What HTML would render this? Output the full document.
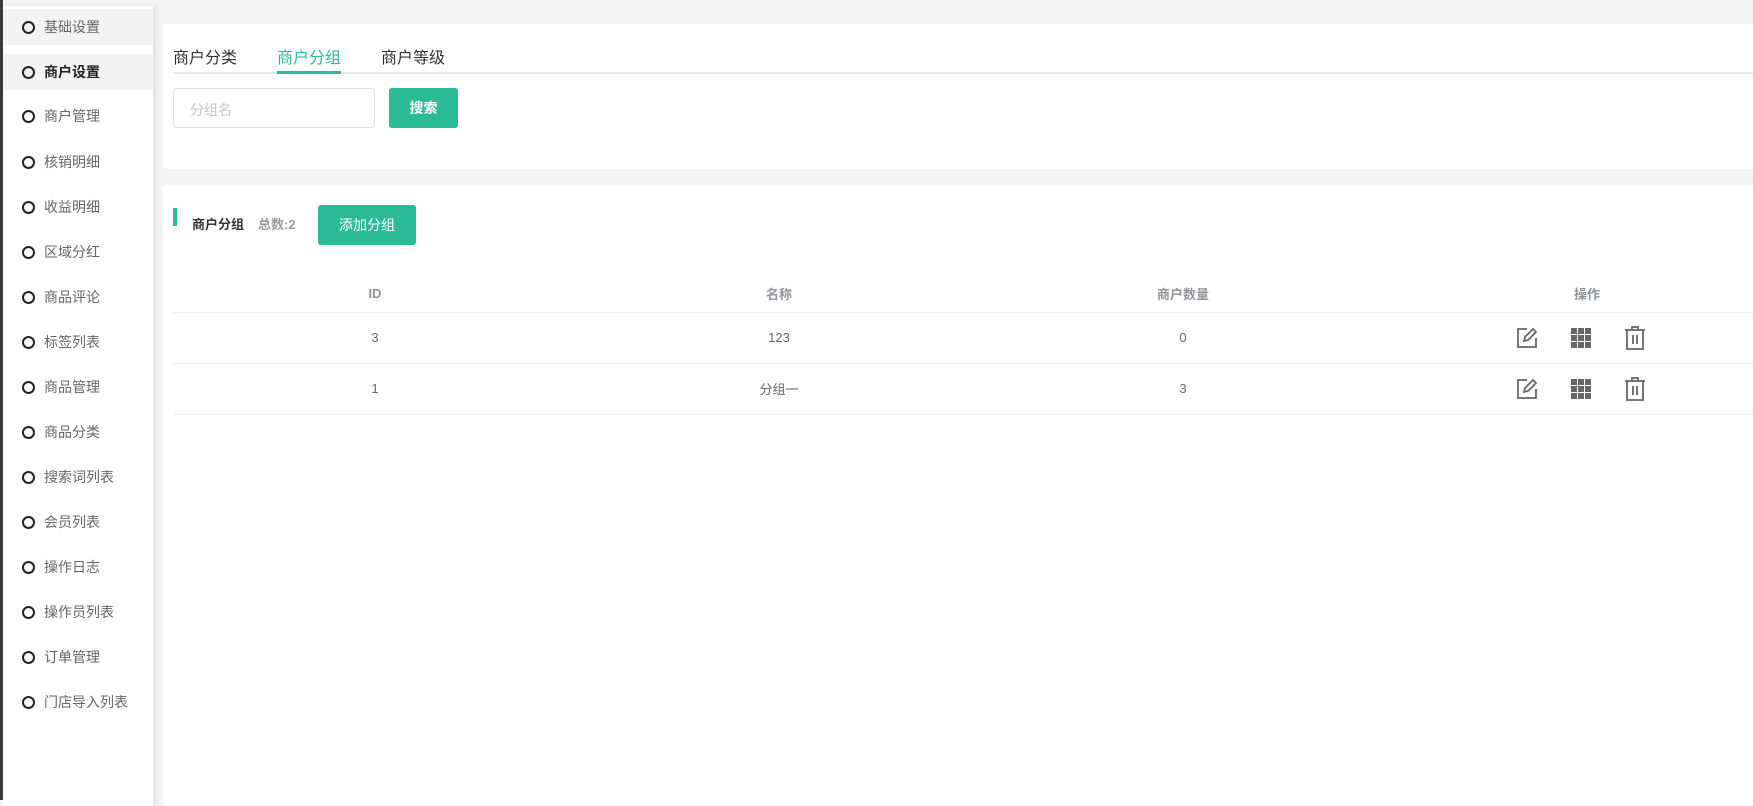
<!DOCTYPE html>
<html><head><meta charset="utf-8"><style>
*{margin:0;padding:0;box-sizing:border-box}
body{width:1753px;height:790px;overflow:hidden;background:#f4f4f4;font-family:"Liberation Sans","Noto Sans CJK SC",sans-serif;position:relative}
.strip{position:absolute;left:0;top:0;width:3px;height:800px;background:#3a3a3a}
.side{position:absolute;left:3px;top:6px;width:150px;height:800px;background:#fff;box-shadow:3px 0 6px rgba(0,0,0,.08)}
.item{position:absolute;left:0;width:150px;height:36px;display:flex;align-items:center;font-size:14px;color:#666}
.item i{display:inline-block;width:13px;height:13px;border:2px solid #222;border-radius:50%;margin-left:19px;margin-right:9px}
.item.g{background:#f3f3f3}
.item.b{color:#222;font-weight:bold}
.p1{position:absolute;left:163px;top:24px;width:1600px;height:145px;background:#fff;border-radius:4px}
.p2{position:absolute;left:163px;top:185px;width:1600px;height:620px;background:#fff;border-radius:4px}
.tab{position:absolute;top:20px;font-size:16px;color:#333}
.tline{position:absolute;left:10px;top:48px;width:1590px;height:2px;background:#e6e8ec}
.input{position:absolute;left:10px;top:64px;width:202px;height:40px;border:1px solid #dfe1e6;border-radius:4px;font-size:14px;color:#c0c4cc;padding:11px 16px}
.btn{position:absolute;background:#2bba98;color:#fff;border-radius:3px;font-size:14px;display:flex;align-items:center;justify-content:center}
table{position:absolute;left:10px;top:90px;width:1616px;border-collapse:collapse}
th{height:37px;font-size:13px;color:#909399;font-weight:bold;text-align:center;width:25%;border-bottom:1px solid #ebeef5}
td{height:51px;font-size:13px;color:#666;text-align:center;border-bottom:1px solid #ebeef5}
td.op{padding-right:12px}
td svg{vertical-align:middle;margin:0 14px}
</style></head><body>
<div class="strip"></div>
<div class="side">
<div class="item g" style="top:3px"><i></i>基础设置</div>
<div class="item g b" style="top:48px"><i></i>商户设置</div>
<div class="item" style="top:92px"><i></i>商户管理</div>
<div class="item" style="top:138px"><i></i>核销明细</div>
<div class="item" style="top:183px"><i></i>收益明细</div>
<div class="item" style="top:228px"><i></i>区域分红</div>
<div class="item" style="top:273px"><i></i>商品评论</div>
<div class="item" style="top:318px"><i></i>标签列表</div>
<div class="item" style="top:363px"><i></i>商品管理</div>
<div class="item" style="top:408px"><i></i>商品分类</div>
<div class="item" style="top:453px"><i></i>搜索词列表</div>
<div class="item" style="top:498px"><i></i>会员列表</div>
<div class="item" style="top:543px"><i></i>操作日志</div>
<div class="item" style="top:588px"><i></i>操作员列表</div>
<div class="item" style="top:633px"><i></i>订单管理</div>
<div class="item" style="top:678px"><i></i>门店导入列表</div>
</div>
<div class="p1">
<div class="tline"></div>
<div class="tab" style="left:10px">商户分类</div>
<div class="tab" style="left:114px;color:#2bba98">商户分组</div>
<div style="position:absolute;left:114px;top:47px;width:64px;height:3px;background:#2bba98"></div>
<div class="tab" style="left:218px">商户等级</div>
<div class="input">分组名</div>
<div class="btn" style="left:226px;top:64px;width:69px;height:40px;font-weight:bold">搜索</div>
</div>
<div class="p2">
<div style="position:absolute;left:10px;top:23px;width:4px;height:18px;background:#2bba98"></div>
<div style="position:absolute;left:29px;top:29px;font-size:13px;font-weight:bold;color:#333">商户分组</div>
<div style="position:absolute;left:95px;top:29px;font-size:13px;font-weight:bold;color:#999">总数:2</div>
<div class="btn" style="left:155px;top:20px;width:98px;height:40px">添加分组</div>
<table>
<tr><th>ID</th><th>名称</th><th>商户数量</th><th>操作</th></tr>
<tr><td>3</td><td>123</td><td>0</td><td class="op">
<svg width="22" height="22" viewBox="0 0 22 22" fill="none" stroke="#666" stroke-width="1.8"><path d="M11 2H2v18h18v-9"/><path d="M8 14l1-4 8-8 3 3-8 8z"/></svg>
<svg width="22" height="22" viewBox="0 0 22 22" fill="#666"><rect x="1" y="1" width="6" height="6"/><rect x="8" y="1" width="6" height="6"/><rect x="15" y="1" width="6" height="6"/><rect x="1" y="8" width="6" height="6"/><rect x="8" y="8" width="6" height="6"/><rect x="15" y="8" width="6" height="6"/><rect x="1" y="15" width="6" height="6"/><rect x="8" y="15" width="6" height="6"/><rect x="15" y="15" width="6" height="6"/></svg>
<svg width="22" height="24" viewBox="0 0 22 24" fill="none" stroke="#666" stroke-width="1.8"><path d="M1 4h20M8 4V1h6v3M3 4v19h16V4M9 9v9M13 9v9"/></svg>
</td></tr>
<tr><td>1</td><td>分组一</td><td>3</td><td class="op">
<svg width="22" height="22" viewBox="0 0 22 22" fill="none" stroke="#666" stroke-width="1.8"><path d="M11 2H2v18h18v-9"/><path d="M8 14l1-4 8-8 3 3-8 8z"/></svg>
<svg width="22" height="22" viewBox="0 0 22 22" fill="#666"><rect x="1" y="1" width="6" height="6"/><rect x="8" y="1" width="6" height="6"/><rect x="15" y="1" width="6" height="6"/><rect x="1" y="8" width="6" height="6"/><rect x="8" y="8" width="6" height="6"/><rect x="15" y="8" width="6" height="6"/><rect x="1" y="15" width="6" height="6"/><rect x="8" y="15" width="6" height="6"/><rect x="15" y="15" width="6" height="6"/></svg>
<svg width="22" height="24" viewBox="0 0 22 24" fill="none" stroke="#666" stroke-width="1.8"><path d="M1 4h20M8 4V1h6v3M3 4v19h16V4M9 9v9M13 9v9"/></svg>
</td></tr>
</table>
</div>
</body></html>
